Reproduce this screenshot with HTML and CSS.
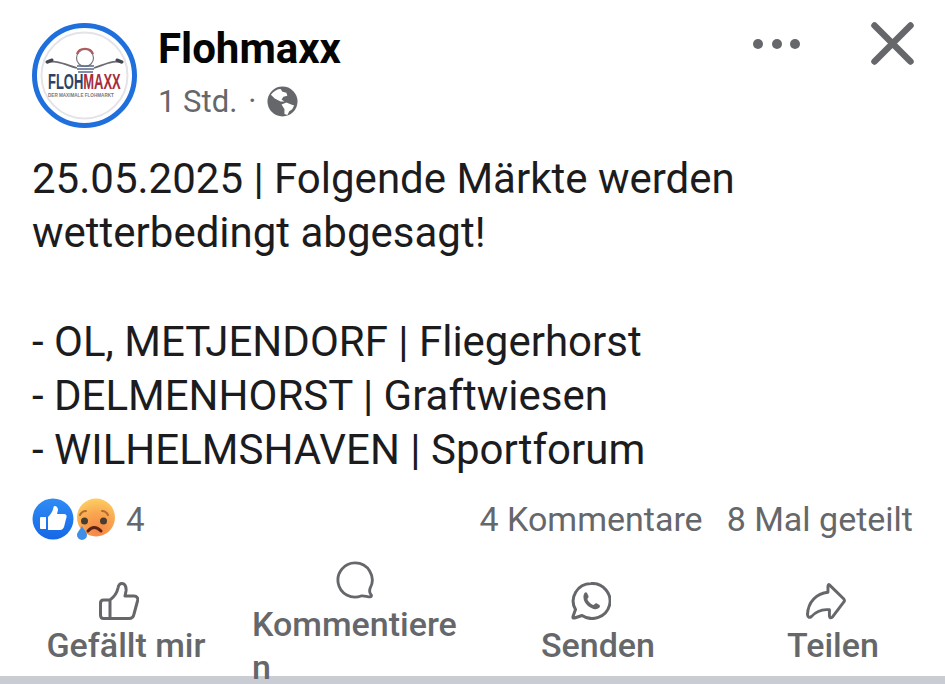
FILE: index.html
```html
<!DOCTYPE html>
<html lang="de">
<head>
    <meta charset="UTF-8">
    <meta name="viewport" content="width=device-width, initial-scale=1.0">
    <title>Flohmaxx</title>
    <link rel="stylesheet" href="styles.css">
</head>
<body>
    <div class="post">
        <header class="post-header">
            <svg class="avatar" viewBox="0 0 105 105">
                <circle cx="52.5" cy="52.5" r="50" fill="#fff" stroke="#1f6fdc" stroke-width="5"/>
                <circle cx="52.5" cy="52.5" r="43" fill="none" stroke="#e4e4e8" stroke-width="2"/>
                <path d="M15 40 C24 36 34 42 45 45 M90 40 C81 36 72 42 62 45" fill="none" stroke="#6b6b74" stroke-width="1.800"/>
                <path d="M15 39 L20 37 M85 37 L90 39" stroke="#45454f" stroke-width="3" stroke-linecap="round"/>
                <circle cx="53" cy="35" r="8.500" fill="#fff" stroke="#7c777e" stroke-width="1.200"/>
                <path d="M45 31 C47 24 59 24 61 31" fill="none" stroke="#b5585a" stroke-width="2.200"/>
                <path d="M45 43 H62 M45 46 H62 M46 49 H61" stroke="#57688a" stroke-width="1.600"/>
                <g transform="translate(16 66) scale(0.59 1)">
                    <text class="logo-word"><tspan fill="#2f4164">FLOH</tspan><tspan fill="#a72d3c">MAXX</tspan></text>
                </g>
                <text class="logo-sub" x="16" y="74">DER MAXIMALE FLOHMARKT</text>
            </svg>
            <div class="post-meta">
                <div class="post-name">Flohmaxx</div>
                <div class="post-time">
                    <span>1 Std.</span>
                    <span class="dot">·</span>
                    <svg class="globe" viewBox="0 0 32 32">
                        <circle cx="16" cy="16" r="15.500" fill="#65676b"/>
                        <path d="M4 9 C7 5 11 3 14 3 L16 6 L20 7 L21 10 L17 11 L15 14 L18 16 L14 16 L8 13Z" fill="#fff"/>
                        <path d="M15 19 L20 17 L25 19 L28 20 L26 24 L23 26 L21 30 L18 29 L18 24Z" fill="#fff"/>
                    </svg>
                </div>
            </div>
            <div class="post-controls">
                <div class="more"><i></i><i></i><i></i></div>
                <svg class="close" viewBox="0 0 43 43">
                    <path d="M3.500 3.500 L39.500 39.500 M39.500 3.500 L3.500 39.500" fill="none" stroke="#65676b" stroke-width="6.500" stroke-linecap="round"/>
                </svg>
            </div>
        </header>

        <p class="post-text">25.05.2025 | Folgende Märkte werden<br>wetterbedingt abgesagt!<br><br>- OL, METJENDORF | Fliegerhorst<br>- DELMENHORST | Graftwiesen<br>- WILHELMSHAVEN | Sportforum</p>

        <div class="post-stats">
            <div class="reactions">
                <svg class="reaction" viewBox="0 0 42 42">
                    <defs>
                        <linearGradient id="likeBg" x1="0" y1="0" x2="0" y2="1">
                            <stop offset="0" stop-color="#2f8cf5"/>
                            <stop offset="1" stop-color="#1667e6"/>
                        </linearGradient>
                    </defs>
                    <circle cx="21" cy="21" r="20.500" fill="url(#likeBg)"/>
                    <path d="M9 19 H14 V31 H9 Q8 31 8 30 V20 Q8 19 9 19Z" fill="#fff"/>
                    <path d="M16 19 C19 16 21 13 21.500 9 C22 7 26 8 26 12 L25 16 H32 C35 16 35 19 34 21 L32 29 C31 31 30 32 28 32 H16Z" fill="#fff"/>
                </svg>
                <svg class="reaction-sad" viewBox="0 0 38 42">
                    <defs>
                        <radialGradient id="sadBg" cx="0.55" cy="0.85" r="0.85">
                            <stop offset="0" stop-color="#f58445"/>
                            <stop offset="0.55" stop-color="#f9a650"/>
                            <stop offset="1" stop-color="#fdce62"/>
                        </radialGradient>
                    </defs>
                    <circle cx="19" cy="19.500" r="19" fill="url(#sadBg)"/>
                    <circle cx="7.500" cy="23" r="3.500" fill="#4a3d30"/>
                    <circle cx="26.500" cy="23" r="3.500" fill="#4a3d30"/>
                    <path d="M3 17 Q5 13 9 13 M31 17 Q29 13 25 13" fill="none" stroke="#b46a2c" stroke-width="2" stroke-linecap="round"/>
                    <path d="M11 33 Q17 26 24 33" fill="none" stroke="#5b2216" stroke-width="3" stroke-linecap="round"/>
                    <path d="M5 28 C7 32 10 34 10 37 A5 5 0 0 1 0 37 C0 34 3 32 5 28Z" fill="#3f8fe8"/>
                </svg>
                <span class="reaction-count">4</span>
            </div>
            <div class="stat-links">
                <span>4 Kommentare</span>
                <span>8 Mal geteilt</span>
            </div>
        </div>

        <div class="actions">
            <div class="action">
                <svg class="action-icon" viewBox="0 0 40 38">
                    <path d="M11 18 C15 15 18 11 19 6 C19.500 3 21 1.500 23 1.500 C26 1.500 27.500 5 27 9 L26 14 H35 C38 14 39.500 16.500 38.500 19 L35 32 C34.500 35 33 36.500 30 36.500 H11Z M11 18 H4.500 C2.500 18 1.500 19 1.500 21 V33 C1.500 35.500 2.500 36.500 4.500 36.500 H11" fill="none" stroke="#65676b" stroke-width="3" stroke-linejoin="round"/>
                </svg>
                <span class="action-label">Gefällt mir</span>
            </div>
            <div class="action action-wrap">
                <svg class="action-icon" viewBox="0 0 40 40">
                    <path d="M20 2 A18 18 0 1 0 26.500 36.800 C29 36 33 37.800 36 37.800 C37.500 37.800 37.800 36 36.500 35 C35 33 35.300 30.500 36 28.500 A18 18 0 0 0 20 2Z" fill="none" stroke="#65676b" stroke-width="3" stroke-linejoin="round"/>
                </svg>
                <span class="action-label">Kommentieren</span>
            </div>
            <div class="action">
                <svg class="action-icon" viewBox="0 0 40 38">
                    <path d="M20 1.500 A18 17.500 0 1 1 11 33.500 L3.500 36 Q1.500 36.500 2 34.500 L4.500 27.500 A18 17.500 0 0 1 20 1.500Z" fill="none" stroke="#65676b" stroke-width="3" stroke-linejoin="round"/>
                    <path d="M13.500 11 Q15 9.500 16 11 L17.500 14 Q18 15 16.500 16.500 Q16 17.500 18 20 Q21 23 22.500 23 Q24 22 25 21 L28.500 23 Q29.500 24 28.500 25.500 Q26 28 22.500 27 Q17 25 14 20.500 Q11 15 13.500 11Z" fill="#65676b"/>
                </svg>
                <span class="action-label">Senden</span>
            </div>
            <div class="action">
                <svg class="action-icon" viewBox="0 0 41 38">
                    <path d="M24 2.500 L38.800 17 Q40 18.500 38.800 20 L27 35.500 Q24.500 37.500 24 34.500 V28 C16 27 10 30 5.500 35 Q2 37 1.500 33 C2 20 11 11 22.500 10 V4 Q22.800 1.500 24 2.500Z" fill="none" stroke="#65676b" stroke-width="3" stroke-linejoin="round"/>
                </svg>
                <span class="action-label">Teilen</span>
            </div>
        </div>
    </div>
    <div class="divider"></div>
</body>
</html>
```

FILE: styles.css
```css
html, body {
    margin: 0;
    height: 100%;
}
body {
    font-family: Roboto, "Liberation Sans", sans-serif;
    background-color: white;
    color: #1c1c1e;
    height: 684px;
    overflow: hidden;
    display: flex;
    flex-direction: column;
}
.post {
    height: 676px;
    padding: 0 32px;
    box-sizing: border-box;
    flex: none;
    position: relative;
    z-index: 1; /* last line of the wrapped label sits on the divider */
}
.divider {
    height: 8px;
    background-color: #c9ccd3;
    flex: none;
}
.post-header {
    display: flex;
    align-items: flex-start;
    padding-top: 23px;
    height: 128px;
    box-sizing: border-box;
}
.avatar {
    width: 105px;
    height: 105px;
    flex: none;
}
.logo-word {
    font-family: "Liberation Sans", sans-serif;
    font-size: 22px;
    font-weight: 700;
}
.logo-sub {
    font-family: "Liberation Sans", sans-serif;
    font-size: 4.600px;
    font-weight: 700;
    fill: #77777f;
}
.post-meta {
    margin-left: 21px;
    padding-top: 1px;
    flex: 1;
}
.post-name {
    font-size: 42px;
    font-weight: 700;
    line-height: 50px;
    color: #050505;
}
.post-time {
    display: flex;
    align-items: center;
    gap: 11px;
    font-size: 31px;
    line-height: 44px;
    margin-top: 6px;
    color: #65676b;
}
.globe {
    width: 31px;
    height: 31px;
    margin-bottom: 2px;
}
.post-controls {
    display: flex;
    align-items: center;
    gap: 71px;
    margin-top: -1px;
    margin-right: -1px;
}
.more {
    display: flex;
    gap: 8.500px;
}
.more i {
    width: 10px;
    height: 10px;
    border-radius: 50%;
    background-color: #65676b;
}
.close {
    width: 43px;
    height: 43px;
}
.post-text {
    margin: 24px 0 0;
    font-size: 42px;
    line-height: 54.300px;
    height: 326px;
}
.post-stats {
    display: flex;
    justify-content: space-between;
    align-items: center;
    margin-top: 20px;
    height: 42px;
    font-size: 34px;
    color: #65676b;
}
.reactions {
    display: flex;
    align-items: center;
}
.reaction {
    width: 42px;
    height: 42px;
}
.reaction-sad {
    width: 38px;
    height: 42px;
    margin-left: 3px;
}
.reaction-count {
    margin-left: 11px;
    font-size: 33px;
}
.stat-links {
    display: flex;
    gap: 24px;
}
.actions {
    display: grid;
    grid-template-columns: 232px 226px 260px 210px;
    align-items: center;
    margin: 21px -32px 0;
    padding-left: 10px;
    height: 124px;
}
.action {
    display: flex;
    flex-direction: column;
    align-items: center;
    padding-bottom: 2px;
    color: #65676b;
    font-size: 34px;
    font-weight: 500;
    line-height: 43px;
}
.action-icon {
    width: 40px;
    height: 38px;
    margin-bottom: 4px;
    margin-right: 15px;
}
.action-wrap {
    padding-bottom: 0;
}
.action-wrap .action-icon {
    margin-right: 0;
}
.action-wrap .action-label {
    width: 206px;
    word-break: break-all;
}
```
